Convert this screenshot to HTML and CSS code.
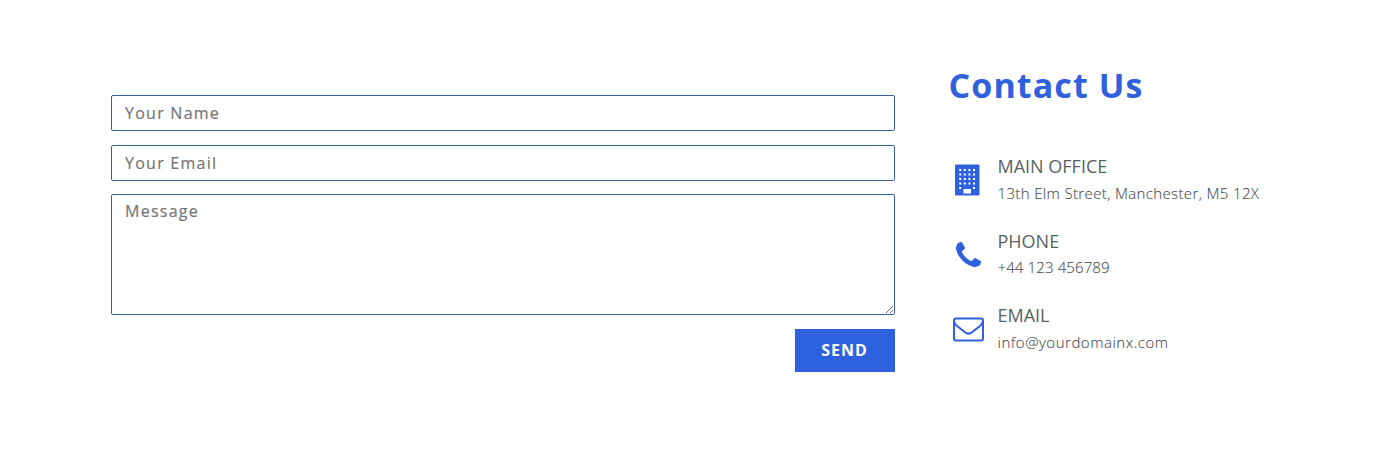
FILE: index.html
```html
<!DOCTYPE html>
<html lang="en">
<head>
<meta charset="utf-8">
<title>Contact Us</title>
<link rel="stylesheet" href="styles.css">
</head>
<body>
<main class="contact">
  <form class="contact-form">
    <input class="field" type="text" placeholder="Your Name" aria-label="Your Name">
    <input class="field" type="email" placeholder="Your Email" aria-label="Your Email">
    <textarea class="field message" placeholder="Message" aria-label="Message"></textarea>
    <button class="send" type="button">SEND</button>
  </form>
  <section class="info">
    <h1 class="title">Contact Us</h1>
    <ul class="list">
      <li class="item">
        <svg class="icon" viewBox="0 0 38 38"><path fill-rule="evenodd" d="M8 3.500h22.500a1 1 0 0 1 1 1v29a1 1 0 0 1-1 1H8a1 1 0 0 1-1-1v-29a1 1 0 0 1 1-1zM11.200 8h2v2h-2zM15.800 8h2v2h-2zM20.400 8h2v2h-2zM25 8h2v2h-2zM11.200 12.500h2v2h-2zM15.800 12.500h2v2h-2zM20.400 12.500h2v2h-2zM25 12.500h2v2h-2zM11.200 17h2v2h-2zM15.800 17h2v2h-2zM20.400 17h2v2h-2zM25 17h2v2h-2zM11.200 21.500h2v2h-2zM15.800 21.500h2v2h-2zM20.400 21.500h2v2h-2zM25 21.500h2v2h-2zM11.200 26h2v2h-2zM25 26h2v2h-2zM15.500 28h7.500v4.500h-7.500z"/></svg>
        <div><h2 class="label">MAIN OFFICE</h2><p class="detail">13th Elm Street, Manchester, M5 12X</p></div>
      </li>
      <li class="item">
        <svg class="icon phone" viewBox="0 0 1408 1408"><path d="M1408 1112q0 27-10 70.500t-21 68.500q-21 50-122 106-94 51-186 51-27 0-53-3.500t-57.500-12.500-47-14.500T856 1357.500t-49-18.500q-98-35-175-83-127-79-264-216T152 776q-48-77-83-175-3-9-18.500-49T30 496.500 15.500 449.500 3.500 392 0 339q0-92 51-186Q107 52 157 31q25-11 68.500-21T296 0q14 0 21 3 18 6 53 76 11 19 30 54t35 63.500 31 53.500q3 4 17.500 25t21.500 35.500 7 28.500q0 20-28.500 50t-62 55-62 53-28.500 46q0 9 5 22.500t8.500 20.500 14 24 11.500 19q76 137 174 235t235 174q2 1 19 11.500t24 14 20.500 8.500 22.500 5q18 0 46-28.500t53-62 55-62 50-28.500q14 0 28.500 7t35.500 21.500 25 17.500q25 15 53.500 31t63.500 35 54 30q70 35 76 53 3 7 3 21z"/></svg>
        <div><h2 class="label">PHONE</h2><p class="detail number">+44 123 456789</p></div>
      </li>
      <li class="item">
        <svg class="icon" viewBox="0 0 38 38"><path fill="none" stroke="#2f61df" stroke-width="2" d="M8 8.500h25a2 2 0 0 1 2 2v18a2 2 0 0 1-2 2H8a2 2 0 0 1-2-2v-18a2 2 0 0 1 2-2zM6 10.500q0 3 3 5.500l8 6.300q3.500 2.700 7 0l8-6.300q3-2.500 3-5.500"/></svg>
        <div><h2 class="label">EMAIL</h2><p class="detail address">info@yourdomainx.com</p></div>
      </li>
    </ul>
  </section>
</main>
</body>
</html>
```
FILE: styles.css
```css
* { box-sizing: border-box; }
body { margin: 0; background: #fff; font-family: "Open Sans", sans-serif; }
.contact { display: flex; gap: 54px; padding-left: 111px; }
.contact-form { width: 784px; padding-top: 95px; display: flex; flex-direction: column; }
.field { display: block; width: 100%; height: 36px; margin: 0 0 14px; padding: 0 13px; border: 1px solid #3560a5; border-radius: 2px; background: #fff; font: 500 16px/24px "Open Sans", sans-serif; letter-spacing: 1.25px; outline: none; }
.field::placeholder { color: #757575; opacity: 1; -webkit-text-stroke: .2px #757575; }
.message { height: 121px; margin-top: -1px; padding-top: 4px; resize: vertical; }
.send { align-self: flex-end; width: 100px; height: 43px; padding: 0 1px 2px 0; border: 0; background: #2f61df; color: #fff; font: 700 16px "Open Sans", sans-serif; letter-spacing: 1px; }
.info { padding-top: 61px; }
.title { margin: 0 0 43px -.5px; color: #2f61df; font-size: 34px; line-height: 48px; font-weight: 700; letter-spacing: 1.1px; }
.list { margin: 0; padding: 0; list-style: none; }
.item { display: flex; height: 74.500px; }
.icon { width: 38px; height: 38px; margin: 9px 11.500px 0 -1px; fill: #2f61df; flex: none; }
.phone { width: 25px; height: 25px; margin: 15px 16.500px 0 7px; }
.label { margin: 0; color: #5a5f64; font-size: 18px; line-height: 29px; font-weight: 400; }
.detail { margin: 0; color: #45494e; font-size: 15px; line-height: 25px; letter-spacing: .36px; font-weight: 300; -webkit-text-stroke: .1px #45494e; }
.number { margin-top: -1px; letter-spacing: .12px; }
.address { letter-spacing: .52px; }
```
